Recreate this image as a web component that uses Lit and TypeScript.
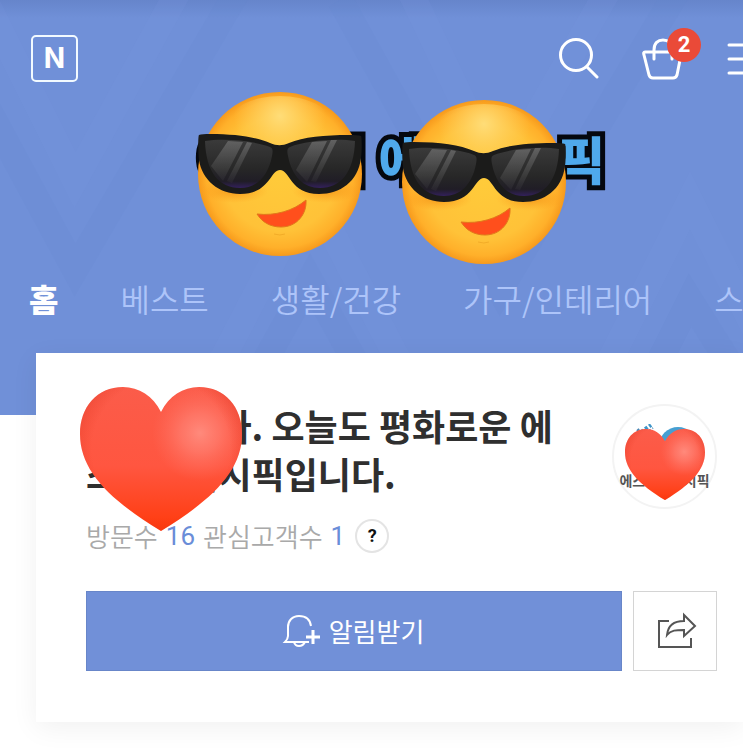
import { LitElement, html, css, svg } from "lit";
import { customElement, property } from "lit/decorators.js";

const STORE_NAME = "에스티에이시픽";
const CATEGORIES = ["홈", "베스트", "생활/건강", "가구/인테리어", "스포츠/레저"];

@customElement("heart-sticker")
class HeartSticker extends LitElement {
  static styles = css`
    :host { display: block; }
    svg { display: block; width: 100%; height: auto; }
  `;
  render() {
    return html`<svg viewBox="0 0 162 144" aria-hidden="true">
      <defs>
        <linearGradient id="base" x1="0" y1="0" x2="0" y2="1">
          <stop offset="0" stop-color="#fb5c4a" />
          <stop offset=".55" stop-color="#ff5640" />
          <stop offset="1" stop-color="#ff3a0c" />
        </linearGradient>
        <radialGradient id="shine" gradientUnits="userSpaceOnUse" cx="120" cy="46" r="48">
          <stop offset="0" stop-color="#ff8a7c" />
          <stop offset=".4" stop-color="#ff8072" stop-opacity=".7" />
          <stop offset="1" stop-color="#ff7060" stop-opacity="0" />
        </radialGradient>
        <radialGradient id="edge" gradientUnits="userSpaceOnUse" cx="81" cy="62" r="92">
          <stop offset=".75" stop-color="#e0301a" stop-opacity="0" />
          <stop offset="1" stop-color="#d8301c" stop-opacity=".4" />
        </radialGradient>
      </defs>
      ${["url(#base)", "url(#shine)", "url(#edge)"].map(
        (fill) => svg`<path fill=${fill} d="M81 25C73 9 59 0 43 0 17 0 0 20 0 47c0 37 30 66 81 97 51-31 81-60 81-97 0-27-17-47-43-47-16 0-30 9-38 25z"/>`
      )}
    </svg>`;
  }
}

@customElement("cool-sticker")
class CoolSticker extends LitElement {
  static styles = css`
    :host { display: block; }
    svg { display: block; width: 100%; height: auto; overflow: visible; }
  `;
  render() {
    return html`<svg viewBox="0 0 164 164" aria-hidden="true">
      <defs>
        <radialGradient id="face" cx=".5" cy=".5" r=".5">
          <stop offset="0" stop-color="#ffcb3a" />
          <stop offset=".7" stop-color="#ffc238" />
          <stop offset=".9" stop-color="#ffb02a" />
          <stop offset="1" stop-color="#f79a1c" />
        </radialGradient>
        <radialGradient id="glow" gradientUnits="userSpaceOnUse" cx="82" cy="24" r="46">
          <stop offset="0" stop-color="#ffdd78" />
          <stop offset="1" stop-color="#ffd060" stop-opacity="0" />
        </radialGradient>
        <radialGradient id="cheek">
          <stop offset="0" stop-color="#f08a10" stop-opacity=".75" />
          <stop offset="1" stop-color="#ff9d1c" stop-opacity="0" />
        </radialGradient>
        <linearGradient id="lens" x1="0" y1="0" x2="0" y2="1">
          <stop offset="0" stop-color="#3a3a3a" />
          <stop offset=".6" stop-color="#272727" />
          <stop offset=".86" stop-color="#201d26" />
          <stop offset="1" stop-color="#33205c" />
        </linearGradient>
        <linearGradient id="glare" x1="0" y1="0" x2="0" y2="1">
          <stop offset="0" stop-color="#fff" stop-opacity=".2" />
          <stop offset="1" stop-color="#fff" stop-opacity=".03" />
        </linearGradient>
      </defs>
      <circle cx="82" cy="82" r="82" fill="url(#face)" />
      <ellipse cx="82" cy="30" rx="50" ry="26" fill="url(#glow)" />
      <ellipse cx="36" cy="99" rx="34" ry="12" fill="url(#cheek)" />
      <ellipse cx="128" cy="99" rx="34" ry="12" fill="url(#cheek)" />
      <path fill="#1b1b1a" d="M1 43c2-1 6-1 11-1 26 0 46 3 60 9 7 3 12 3 19 0 14-6 36-8 60-8 6 0 10 0 12 1 1 1 1 14 0 22-3 24-21 36-42 36-29 0-29-24-39-24S72 102 42 102C21 102 4 88 1 68 0 60 0 44 1 43z" />
      <path fill="url(#lens)" d="M7 49c20-3 50 0 65 6 3 1 3 4 2 9-4 21-16 32-32 32C21 96 8 80 7 49z" />
      <path fill="url(#lens)" d="M157 49c-20-3-50 0-65 6-3 1-3 4-2 9 4 21 16 32 32 32 21 0 34-16 35-47z" />
      <g fill="url(#glare)">
        <path d="M30 49l15 1-20 39-12-15z" />
        <path d="M49 50l5 1-20 40-5-2z" />
        <path d="M114 50l15-1-20 41-11-12z" />
        <path d="M133 48l6 0-21 42-5-1z" />
      </g>
      <path fill="#ff4f1c" stroke="#e2781a" stroke-width="1" d="M59 122c18 2 36-3 49-14 1 14-9 27-25 27-11 0-19-5-24-13z" />
      <path d="M76 142q6 2 11 0" fill="none" stroke="#e9a020" stroke-width="1" opacity=".6" />
    </svg>`;
  }
}

@customElement("shop-header")
class ShopHeader extends LitElement {
  @property({ type: Number }) cartCount = 2;

  static styles = css`
    :host { display: block; }
    .bar { display: flex; align-items: center; gap: 44px; padding-left: 31px; overflow: hidden; }
    .logo {
      box-sizing: border-box; width: 47px; height: 47px; margin-right: auto;
      display: flex; align-items: center; justify-content: center;
      border: 2px solid #f2faff; border-radius: 5px;
      color: #fff; text-decoration: none;
      font: 700 28px/28px Inter, sans-serif;
    }
    .tool {
      position: relative; flex: none; display: block; padding: 0; border: 0;
      background: none; color: #fff; cursor: pointer;
    }
    .tools { display: flex; align-items: center; height: 64px; gap: 43px; box-sizing: border-box; padding-top: 2px; }
    .menu { width: 16px; }
    svg { display: block; fill: none; stroke: currentColor; stroke-width: 3; stroke-linecap: round; stroke-linejoin: round; }
    .count {
      position: absolute; left: 25px; top: -10px; width: 34px; height: 34px; border-radius: 50%;
      background: #ea4a38; color: #fff; text-align: center;
      font: 700 22px/34px Roboto, sans-serif;
    }
  `;
  render() {
    return html`<header class="bar">
      <a class="logo" href="#" aria-label="N">N</a>
      <div class="tools">
        <button class="tool" aria-label="검색">
          <svg width="40" height="42" viewBox="0 0 40 42"><circle cx="17" cy="17" r="15.5" /><path d="M28 29l10 10" /></svg>
        </button>
        <button class="tool" aria-label="장바구니">
          <svg width="42" height="42" viewBox="0 0 42 42">
            <path d="M3 14h35q2 0 1 3l-4 20q-1 3-4 3H11q-3 0-4-3L2 17q-1-3 1-3zM12 21v-9C12 5 16 2 21 2s9 3 9 10v9" />
          </svg>
          <span class="count">${this.cartCount}</span>
        </button>
        <button class="tool menu" aria-label="메뉴">
          <svg width="40" height="42" viewBox="0 0 40 42"><path d="M2 7h36M2 21h36M2 35h36" /></svg>
        </button>
      </div>
    </header>`;
  }
}

@customElement("app-root")
class AppRoot extends LitElement {
  static styles = css`
    :host {
      display: block; min-height: 100vh; overflow: hidden; background: #fff;
      font-family: "Noto Sans CJK KR", sans-serif;
    }
    .hero {
      position: relative; display: flow-root; padding: 26px 0 93px;
      background: linear-gradient(#6685cb, #7090d8 18px);
    }
    .pattern { position: absolute; inset: 0; width: 100%; height: 100%; }
    .content { position: relative; }
    .banner { display: flex; justify-content: center; padding-left: 61px; margin-top: 39px; }
    .name-wrap { position: relative; }
    .name {
      display: flex; gap: 13px; margin: 0; font-size: 51px; line-height: 58px; font-weight: 900;
      color: #4fa9ec; -webkit-text-stroke: 10px #05080f; paint-order: stroke fill;
    }
    .sticker { position: absolute; width: 164px; }
    .first { left: -1px; top: -37px; }
    .second { left: 203px; top: -29px; }
    .tabs { display: flex; gap: 62px; margin-top: 87px; padding-left: 29px; overflow: hidden; }
    .tab {
      flex: none; color: #adc4f9; font-size: 32px; line-height: 48px; font-weight: 350;
      text-decoration: none; white-space: nowrap;
    }
    .tab.active { color: #fff; font-weight: 900; }
    .card {
      position: relative; margin: -62px 0 33px 36px; padding: 48px 26px 51px 50px;
      background: #fff; box-shadow: 0 6px 26px rgba(0, 0, 0, 0.06);
    }
    .intro { display: flex; gap: 48px; align-items: flex-start; }
    .text { position: relative; flex: 1; min-width: 0; }
    .greeting { margin: 0; color: #2f2f2f; font-size: 36px; line-height: 48px; font-weight: 700; }
    .heart { position: absolute; left: -6px; top: -14px; width: 162px; }
    .stats {
      display: flex; align-items: center; gap: 8px; margin: 22px 0 0;
      color: #a9a9a9; font-size: 26px; line-height: 34px; font-weight: 350;
    }
    .num { color: #6a8dd8; font-family: Roboto, sans-serif; font-weight: 400; }
    .help {
      box-sizing: border-box; width: 34px; height: 34px; margin-left: 2px; padding: 0;
      border: 2px solid #e4e4e4; border-radius: 50%; background: #fff; color: #111;
      font: 700 18px/30px Roboto, sans-serif;
    }
    .avatar {
      position: relative; flex: none; box-sizing: border-box; width: 105px; height: 105px; margin-top: 3px;
      display: flex; flex-direction: column; align-items: center; padding-top: 18px;
      border: 2px solid #f3f3f3; border-radius: 50%;
    }
    .mark { display: block; width: 76px; height: 46px; }
    .label { color: #555; font-size: 14px; line-height: 20px; font-weight: 700; white-space: nowrap; }
    .small-heart { position: absolute; left: 11px; top: 23px; width: 80px; }
    .actions { display: flex; gap: 11px; margin-top: 38px; }
    button { cursor: pointer; }
    .notify {
      flex: 1; height: 80px; display: flex; align-items: center; justify-content: center; gap: 8px;
      padding: 0; border: 1px solid #6886c9; background: #7190d8; color: #fff;
      font: 400 26px/40px "Noto Sans CJK KR", sans-serif;
    }
    .share {
      flex: none; width: 84px; height: 80px; display: flex; align-items: center; justify-content: center;
      padding: 0; border: 1px solid #d4d4d4; background: #fff; color: #555;
    }
    .icon { display: block; fill: none; stroke: currentColor; overflow: visible; }
  `;

  render() {
    return html`
      <section class="hero">
        <svg class="pattern" viewBox="0 0 743 415" preserveAspectRatio="xMidYMid slice" aria-hidden="true">
          <g fill="none" stroke-width="26">
            <path stroke="#7896dc" stroke-opacity=".18" d="M-30-30L75 180 190-30M170 460L310 190 450 460M400-30L500 180 620-30M560 460L690 200 820 460" />
            <path stroke="#6688cf" stroke-opacity=".14" d="M-60 20L75 270 250-30M210 460L310 280 410 460M340 0L500 290 690-30M610 460L690 300 790 460" />
          </g>
        </svg>
        <div class="content">
          <shop-header></shop-header>
          <div class="banner">
            <div class="name-wrap">
              <h1 class="name" aria-label=${STORE_NAME}>${[...STORE_NAME].map((c) => html`<span>${c}</span>`)}</h1>
              <cool-sticker class="sticker first"></cool-sticker>
              <cool-sticker class="sticker second"></cool-sticker>
            </div>
          </div>
          <nav class="tabs">
            ${CATEGORIES.map((c, i) => html`<a href="#" class=${i === 0 ? "tab active" : "tab"}>${c}</a>`)}
          </nav>
        </div>
      </section>
      <main class="card">
        <div class="intro">
          <div class="text">
            <h2 class="greeting">반갑습니다. 오늘도 평화로운 ${STORE_NAME}입니다.</h2>
            <p class="stats">
              <span>방문수</span><span class="num">16</span>
              <span>관심고객수</span><span class="num">1</span>
              <button class="help" aria-label="도움말">?</button>
            </p>
            <heart-sticker class="heart"></heart-sticker>
          </div>
          <div class="avatar">
            <svg class="mark" viewBox="0 0 76 46" aria-hidden="true">
              <circle cx="51" cy="22" r="19" fill="#469fd2" />
              <path d="M6 14L24 1" stroke="#3d94c8" stroke-width="4" stroke-dasharray="3 2" />
              <path d="M10 7l3-3M17 10l9-6M2 17l6-5" stroke="#4a86b4" stroke-width="2" stroke-dasharray="3 2" />
            </svg>
            <span class="label">${STORE_NAME}</span>
            <heart-sticker class="small-heart"></heart-sticker>
          </div>
        </div>
        <div class="actions">
          <button class="notify">
            <svg class="icon" width="37" height="34" viewBox="0 0 37 34" stroke-width="2">
              <path d="M27 12C26 5 21 2 15 2 8 2 4 7 4 13v9q0 3-3 6h24M10 28q1 4 5 4t6-4" />
              <path d="M29 16v14M22 23h14" stroke-width="3" />
            </svg>
            <span>알림받기</span>
          </button>
          <button class="share" aria-label="공유">
            <svg class="icon" width="40" height="36" viewBox="-2 0 40 36" stroke-width="2">
              <path d="M12 8H2v26h32v-9M10 22C11 12 17 8 27 8V2l11 11-11 10v-6c-8 0-13 0-17 5z" />
            </svg>
          </button>
        </div>
      </main>
    `;
  }
}
